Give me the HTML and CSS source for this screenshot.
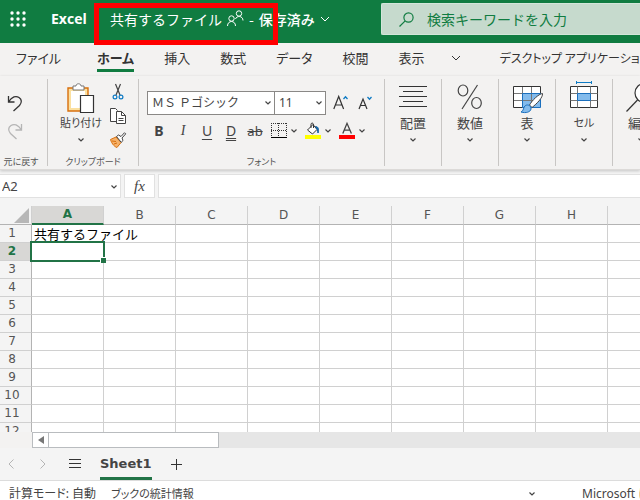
FILE: index.html
```html
<!DOCTYPE html>
<html lang="ja">
<head>
    <meta charset="UTF-8">
    <meta name="viewport" content="width=device-width, initial-scale=1.0">
    <title>Excel</title>
    <link rel="stylesheet" href="styles.css">
</head>
<body>
    <svg class="defs" aria-hidden="true">
        <symbol id="chevron" viewBox="0 0 10 6"><path d="M1 1l4 4 4-4" fill="none" stroke="currentColor"/></symbol>
        <symbol id="caret" viewBox="0 0 6 4"><path d="M.5 .5L3 3 5.500 .5" fill="none" stroke="currentColor" stroke-width="1.200"/></symbol>
    </svg>

    <header class="header">
        <button class="waffle" aria-label="アプリ起動ツール">
            <svg width="16" height="16" viewBox="0 0 16 16" fill="#fff">
                <circle cx="2" cy="2" r="1.700"/><circle cx="8" cy="2" r="1.700"/><circle cx="14" cy="2" r="1.700"/>
                <circle cx="2" cy="8" r="1.700"/><circle cx="8" cy="8" r="1.700"/><circle cx="14" cy="8" r="1.700"/>
                <circle cx="2" cy="14" r="1.700"/><circle cx="8" cy="14" r="1.700"/><circle cx="14" cy="14" r="1.700"/>
            </svg>
        </button>
        <span class="app-name">Excel</span>
        <button class="doc-title">
            <span>共有するファイル</span>
            <svg class="people" width="17" height="17" viewBox="0 0 17 17" fill="none" stroke="#fff">
                <circle cx="4.500" cy="7.500" r="2.700"/><path d="M.5 15c0-6 8-6 8 0"/>
                <circle cx="12" cy="2.500" r="2.700"/><path d="M8.500 8c1-3.500 7.500-3.500 7.500 1.500"/>
            </svg>
            <span>-</span>
            <span class="saved">保存済み</span>
            <svg width="10" height="6"><use href="#chevron"/></svg>
        </button>
        <label class="search">
            <svg width="15" height="15" viewBox="0 0 15 15" fill="none" stroke="#107c41" stroke-width="1.200"><circle cx="9.500" cy="5.500" r="4.600"/><path d="M6.200 8.800L.5 14.500"/></svg>
            <input type="text" placeholder="検索キーワードを入力" aria-label="検索">
        </label>
        <div class="highlight"></div>
    </header>

    <nav class="tabs">
        <button class="tab tab-file">ファイル</button>
        <button class="tab active">ホーム</button>
        <button class="tab">挿入</button>
        <button class="tab">数式</button>
        <button class="tab">データ</button>
        <button class="tab">校閲</button>
        <button class="tab">表示</button>
        <button class="tab tab-more" aria-label="その他のタブ"><svg width="10" height="6"><use href="#chevron"/></svg></button>
        <button class="tab desktop-app">デスクトップ アプリケーションで開く</button>
    </nav>

    <div class="ribbon">
        <section class="group group-undo">
            <div class="group-body stack">
                <button aria-label="元に戻す"><svg width="16" height="17" viewBox="0 0 16 17" fill="none" stroke="#333" stroke-width="1.300"><path d="M1.500 1v6h6M1.500 7C5 1.500 9 .5 12 2.500s3 5 .5 8L6.500 16"/></svg></button>
                <button aria-label="やり直し"><svg width="16" height="17" viewBox="0 0 16 17" fill="none" stroke="#b5b5b5" stroke-width="1.300"><path d="M14.500 1v6h-6M14.500 7C11 1.500 7 .5 4 2.500s-3 5-.5 8L9.500 16"/></svg></button>
            </div>
            <h2>元に戻す</h2>
        </section>
        <section class="group group-clipboard">
            <div class="group-body">
                <button class="big paste">
                    <svg width="28" height="30" viewBox="0 0 28 30">
                        <path d="M1 5h20v23H1z" fill="#fbe0a0" stroke="#d86f0c" stroke-width="1.400"/>
                        <path d="M4 8h14v17H4z" fill="#fff"/>
                        <path d="M6 7V3h3c0-3 5-3 5 0h3v4z" fill="#fff" stroke="#777"/>
                        <path d="M13.500 12.500h13v17h-13z" fill="#fff" stroke="#333" stroke-width="1.200"/>
                    </svg>
                    <span>貼り付け</span>
                    <svg width="6" height="4"><use href="#caret"/></svg>
                </button>
                <div class="small-icons">
                    <button aria-label="切り取り"><svg width="16" height="16" viewBox="0 0 16 16" fill="none" stroke="#444" stroke-width="1.200"><path d="M5.500 0l4.500 11M10.500 0L6 11"/><circle cx="5" cy="13" r="1.900" stroke="#0f7bc4"/><circle cx="11" cy="13" r="1.900" stroke="#0f7bc4"/></svg></button>
                    <button aria-label="コピー"><svg width="16" height="16" viewBox="0 0 16 16" fill="#fff" stroke="#444"><path d="M6.500 13.500h-6v-13h5l2 2"/><path d="M6.500 3.500h5l4 4v8h-9z"/><path d="M11.500 3.500v4h4M8.500 10.500h5M8.500 12.500h5" fill="none"/></svg></button>
                    <button aria-label="書式のコピー"><svg width="16" height="16" viewBox="0 0 16 16"><path d="M.5 7.500L6 5l5 5.500-4 5c-2-.5-5-3-6.500-8z" fill="#f6b26b" stroke="#d86f0c"/><path d="M2 9l4 .5M4 12l3-1" stroke="#d86f0c"/><path d="M6.500 4.500l2-1.500 2.500 1.500L14.500.7l1.200 1.200L12 6l1 2.500-1.800 1.800z" fill="#fff" stroke="#444"/></svg></button>
                </div>
            </div>
            <h2>クリップボード</h2>
        </section>
        <section class="group group-font">
            <div class="group-body font-body">
                <div class="font-row">
                    <div class="combo combo-font">
                        <select aria-label="フォント"><option>ＭＳ Ｐゴシック</option></select>
                        <svg width="6" height="4"><use href="#caret"/></svg>
                    </div>
                    <div class="combo combo-size">
                        <select aria-label="フォント サイズ"><option>11</option></select>
                        <svg width="6" height="4"><use href="#caret"/></svg>
                    </div>
                    <button class="grow" aria-label="フォント サイズの拡大"><svg width="16" height="17" viewBox="0 0 16 17" fill="none"><path d="M.8 14L5.700 1.500 10.600 14M2.500 10h6.400" stroke="#333" stroke-width="1.200"/><path d="M10.500 4L12.500 1.700 14.500 4" stroke="#0f7bc4" stroke-width="1.300"/></svg></button>
                    <button class="shrink" aria-label="フォント サイズの縮小"><svg width="16" height="17" viewBox="0 0 16 17" fill="none"><path d="M1 14L5 4l4 10M2.400 10.500h5.200" stroke="#333" stroke-width="1.200"/><path d="M9.500 2L11.500 4.300 13.500 2" stroke="#0f7bc4" stroke-width="1.300"/></svg></button>
                </div>
                <div class="font-row format-row">
                    <button class="fmt bold">B</button>
                    <button class="fmt italic">I</button>
                    <button class="fmt underline">U</button>
                    <button class="fmt double">D</button>
                    <button class="fmt strike">ab</button>
                    <button class="tool" aria-label="罫線"><svg width="16" height="16" viewBox="0 0 16 16"><path d="M0 .5h16M0 7.500h16M.5 0v14M7.500 0v14M15.500 0v14" stroke="#333" stroke-dasharray="1 1"/><path d="M0 14.500h16" stroke="#000"/></svg><svg width="6" height="4"><use href="#caret"/></svg></button>
                    <button class="tool" aria-label="塗りつぶしの色"><svg width="16" height="16" viewBox="0 0 16 16"><path d="M2.500 7L8 1.500l4 5-4.500 4.500z" fill="#fff" stroke="#333"/><path d="M6 5V1.500C6-.5 8.500-.5 8.500 2v3" fill="none" stroke="#333"/><path d="M10.500 3.500c3 0 3.500 3 2.500 6.500-.2-3-1-4.500-2.500-6.500z" fill="#0f7bc4" stroke="#0f5a9c"/><path d="M0 12h16v4H0z" fill="#ff0"/></svg><svg width="6" height="4"><use href="#caret"/></svg></button>
                    <button class="tool" aria-label="フォントの色"><svg width="16" height="16" viewBox="0 0 16 16"><path d="M3.800 10.500L8 .3l4.400 10.200M5.300 7.200h5.500" fill="none" stroke="#444" stroke-width="1.300"/><path d="M0 12h16v4H0z" fill="red"/></svg><svg width="6" height="4"><use href="#caret"/></svg></button>
                </div>
            </div>
            <h2>フォント</h2>
        </section>
        <section class="group group-drop">
            <button class="big">
                <svg width="28" height="30" viewBox="0 0 28 30" stroke="#333"><path d="M0 3.500h28M4 8.500h20M0 13.500h28M4 18.500h20M0 23.500h28"/></svg>
                <span>配置</span>
                <svg width="6" height="4"><use href="#caret"/></svg>
            </button>
        </section>
        <section class="group group-drop">
            <button class="big">
                <svg width="28" height="30" viewBox="0 0 28 30" fill="none" stroke="#444" stroke-width="1.200"><ellipse cx="7" cy="7.500" rx="4.800" ry="5.500"/><ellipse cx="20.500" cy="20" rx="4.800" ry="5.500"/><path d="M21.500 2l-15.500 24"/></svg>
                <span>数値</span>
                <svg width="6" height="4"><use href="#caret"/></svg>
            </button>
        </section>
        <section class="group group-drop">
            <button class="big">
                <svg width="30" height="30" viewBox="0 0 30 30">
                    <path d="M1.500 3.500h27v21h-27z" fill="#fff"/><path d="M10.500 10.500h18v14h-18z" fill="#83bbec"/>
                    <path d="M1.500 10.500h27M1.500 17.500h27M10.500 3.500v21M19.500 3.500v21" stroke="#777" fill="none"/>
                    <path d="M28.500 10.500v-7h-27v21h9" stroke="#333" fill="none"/>
                    <path d="M10.500 24.500v-14h18v14z" stroke="#1a6fbd" fill="none"/>
                    <path d="M30.500 10.500c-4 .5-10.500 7-13 11.500l2.500 2.500C25 20.500 31 14.500 30.500 10.500z" fill="#fff" stroke="#444"/>
                    <path d="M9 29c3-1 2-5 4.500-6.500s6 .5 5.500 3.500-5 4.500-10 3z" fill="#83bbec" stroke="#1a6fbd"/>
                </svg>
                <span>表</span>
                <svg width="6" height="4"><use href="#caret"/></svg>
            </button>
        </section>
        <section class="group group-drop">
            <button class="big">
                <svg width="28" height="30" viewBox="0 0 28 30">
                    <path d="M.5 3.500h27v21H.5z" fill="#fff" stroke="#333"/>
                    <path d="M.5 10.500h27M.5 17.500h27M7.500 3.500v21M20.500 3.500v21" stroke="#777"/>
                    <path d="M7.500 10.500h13v7h-13z" fill="#83bbec" stroke="#1a6fbd"/>
                    <path d="M6.500 -.5h15M6.500-2v3M21.500-2v3" stroke="#0f7bc4"/>
                </svg>
                <span class="kana">セル</span>
                <svg width="6" height="4"><use href="#caret"/></svg>
            </button>
        </section>
        <section class="group group-drop">
            <button class="big">
                <svg width="30" height="30" viewBox="0 0 30 30" fill="none" stroke="#333" stroke-width="1.200"><circle cx="18.500" cy="10" r="9.500" fill="#fff"/><path d="M11.500 17L.5 28.500"/></svg>
                <span>編集</span>
                <svg width="6" height="4"><use href="#caret"/></svg>
            </button>
        </section>
    </div>

    <div class="formula-bar">
        <div class="name-box">
            <input type="text" value="A2" aria-label="名前ボックス">
            <svg width="6" height="4"><use href="#caret"/></svg>
        </div>
        <button class="fx">fx</button>
        <input class="formula" type="text" aria-label="数式バー">
    </div>

    <main class="grid">
        <table class="sheet">
            <colgroup><col class="col-num"><col span="9" class="col-cell"></colgroup>
            <thead>
                <tr><th class="corner"><svg width="15" height="15"><path d="M15 0v15H0z" fill="#b7b7b7"/></svg></th><th class="selected">A</th><th>B</th><th>C</th><th>D</th><th>E</th><th>F</th><th>G</th><th>H</th><th>I</th></tr>
            </thead>
            <tbody>
                <tr><th>1</th><td class="spill">共有するファイル</td><td></td><td></td><td></td><td></td><td></td><td></td><td></td><td></td></tr>
                <tr><th class="selected">2</th><td class="current"><div class="selection"></div></td><td></td><td></td><td></td><td></td><td></td><td></td><td></td><td></td></tr>
                <tr><th>3</th><td></td><td></td><td></td><td></td><td></td><td></td><td></td><td></td><td></td></tr>
                <tr><th>4</th><td></td><td></td><td></td><td></td><td></td><td></td><td></td><td></td><td></td></tr>
                <tr><th>5</th><td></td><td></td><td></td><td></td><td></td><td></td><td></td><td></td><td></td></tr>
                <tr><th>6</th><td></td><td></td><td></td><td></td><td></td><td></td><td></td><td></td><td></td></tr>
                <tr><th>7</th><td></td><td></td><td></td><td></td><td></td><td></td><td></td><td></td><td></td></tr>
                <tr><th>8</th><td></td><td></td><td></td><td></td><td></td><td></td><td></td><td></td><td></td></tr>
                <tr><th>9</th><td></td><td></td><td></td><td></td><td></td><td></td><td></td><td></td><td></td></tr>
                <tr><th>10</th><td></td><td></td><td></td><td></td><td></td><td></td><td></td><td></td><td></td></tr>
                <tr><th>11</th><td></td><td></td><td></td><td></td><td></td><td></td><td></td><td></td><td></td></tr>
                <tr><th>12</th><td></td><td></td><td></td><td></td><td></td><td></td><td></td><td></td><td></td></tr>
            </tbody>
        </table>
    </main>

    <div class="scrollbar">
        <button class="scroll-left" aria-label="左へスクロール"><svg width="6" height="8"><path d="M6 0v8L0 4z" fill="#777"/></svg></button>
        <div class="thumb"></div>
    </div>

    <div class="sheet-tabs">
        <button class="prev" aria-label="前のシート"><svg width="6" height="10" viewBox="0 0 6 10" fill="none" stroke="#b5b5b5"><path d="M5.500 .5L1 5l4.500 4.500"/></svg></button>
        <button class="next" aria-label="次のシート"><svg width="6" height="10" viewBox="0 0 6 10" fill="none" stroke="#b5b5b5"><path d="M.5 .5L5 5 .5 9.500"/></svg></button>
        <button class="all-sheets" aria-label="すべてのシート"><svg width="12" height="10" viewBox="0 0 12 10" stroke="#333"><path d="M0 .5h12M0 4.500h12M0 8.500h12"/></svg></button>
        <button class="sheet-name">Sheet1</button>
        <button class="add" aria-label="新しいシート"><svg width="11" height="11" viewBox="0 0 11 11" stroke="#333"><path d="M0 5.500h11M5.500 0v11"/></svg></button>
    </div>

    <footer class="status">
        <span class="calc">計算モード: 自動</span>
        <span class="stats">ブックの統計情報</span>
        <svg class="status-caret" width="6" height="4"><use href="#caret"/></svg>
        <span class="feedback">Microsoft にフィードバックを送信</span>
    </footer>
</body>
</html>
```
FILE: styles.css
```css
/* General Styles */
* {
    box-sizing: border-box;
}

body {
    margin: 0;
    height: 100vh;
    display: flex;
    flex-direction: column;
    overflow: hidden;
    background: #f3f2f1;
    color: #444;
    font-family: "Noto Sans", "Noto Sans CJK JP", sans-serif;
    font-size: 12px;
    line-height: 16px;
    white-space: nowrap;
}

button, input, select {
    font: inherit;
    color: inherit;
    border: none;
    padding: 0;
    background: none;
    white-space: nowrap;
}

svg {
    display: block;
    flex-shrink: 0;
    overflow: visible;
}

.defs {
    position: absolute;
    width: 0;
    height: 0;
}

/* Header */
.header {
    position: relative;
    display: flex;
    align-items: center;
    flex-shrink: 0;
    padding: 3px 0 8px 10px;
    background: #107c41;
    color: #fff;
    font-size: 14px;
}

.app-name {
    width: 59px;
    margin-left: 25px;
    font-family: "Open Sans", sans-serif;
    font-weight: 700;
}

.doc-title {
    display: flex;
    align-items: center;
    gap: 5px;
    width: 271px;
    font-family: "Noto Sans CJK JP", sans-serif;
}

.saved {
    font-weight: 500;
}

.search {
    flex: 1;
    display: flex;
    align-items: center;
    gap: 13px;
    height: 32px;
    padding-left: 17px;
    border: 1px solid #d3e6da;
    border-right: none;
    border-radius: 2px 0 0 2px;
    background: #c6dacd;
}

.search input {
    flex: 1;
    min-width: 0;
    font-family: "Noto Sans CJK JP", sans-serif;
}

.search input::placeholder {
    color: #107c41;
    opacity: 1;
}

/* Red frame round the file name */
.highlight {
    position: absolute;
    top: 3px;
    left: 94px;
    width: 184px;
    height: 42px;
    border: 5px solid #f00;
    z-index: 1;
}

/* Ribbon tabs */
.tabs {
    display: flex;
    align-items: center;
    flex-shrink: 0;
    gap: 30px;
    height: 33px;
    padding-left: 16px;
    overflow: hidden;
    color: #333;
    font-family: "Noto Sans CJK JP", sans-serif;
    font-size: 13px;
    font-feature-settings: "palt";
}

.tab {
    flex-shrink: 0;
    height: 25px;
    border-bottom: 3px solid transparent;
}

.tab.active {
    font-weight: 700;
    border-color: #107c41;
}

.tab-file {
    margin-right: 6px;
}

.tab-more {
    margin: 0 9px 0 -4px;
}

.desktop-app {
    font-size: 12px;
}

/* Ribbon */
.ribbon {
    display: flex;
    flex-shrink: 0;
    height: 94px;
    padding: 3px 0;
    border-bottom: 1px solid #dcdad8;
    box-shadow: 0 1px 3px rgba(0, 0, 0, 0.2);
    font-feature-settings: "palt";
    z-index: 1;
}

.group {
    display: flex;
    flex-direction: column;
    align-items: center;
    flex-shrink: 0;
    border-right: 1px solid #c8c6c4;
}

.group h2 {
    margin: auto 0 0;
    font-size: 9px;
    font-weight: 400;
    line-height: 9px;
    color: #555;
}

.group-undo {
    width: 48px;
}

.group-undo h2 {
    padding-right: 5px;
}

.group-clipboard {
    width: 91px;
}

.group-font {
    width: 246px;
}

.group-drop {
    width: 57px;
}

.group-body {
    display: flex;
}

.stack {
    flex-direction: column;
    gap: 11px;
    padding: 16px 17px 0 0;
}

.group-clipboard .group-body {
    gap: 8px;
}

.big {
    display: flex;
    flex-direction: column;
    align-items: center;
    padding-top: 4px;
    font-size: 13px;
}

.big span {
    line-height: 20px;
    margin-bottom: 5px;
}

.paste, .big .kana {
    font-size: 11px;
}

.small-icons {
    display: flex;
    flex-direction: column;
    gap: 8px;
    padding-top: 5px;
}

/* Font group */
.font-body {
    flex-direction: column;
    align-self: stretch;
    gap: 6px;
    padding: 12px 0 0 8px;
}

.font-row {
    display: flex;
    align-items: center;
}

.combo {
    position: relative;
    height: 24px;
}

.combo select {
    width: 100%;
    height: 100%;
    padding-left: 4px;
    appearance: none;
    border: 1px solid #8a8886;
    border-radius: 0;
    background: #fff;
    font-feature-settings: normal;
}

.combo svg, .name-box svg {
    position: absolute;
    top: 10px;
    right: 4px;
    pointer-events: none;
}

.combo-font {
    width: 128px;
}

.combo-size {
    width: 52px;
    margin-left: -1px;
}

.grow {
    margin-left: 7px;
}

.shrink {
    margin-left: 9px;
}

.fmt {
    width: 24px;
    height: 20px;
    font-size: 14px;
}

.bold {
    font-weight: 700;
}

.italic {
    font-family: "Liberation Serif", serif;
    font-style: italic;
}

.underline {
    text-decoration: underline;
    text-underline-offset: 3px;
}

.double {
    text-decoration: underline double;
    text-underline-offset: 2px;
}

.strike {
    font-size: 13px;
    text-decoration: line-through;
}

.tool {
    display: flex;
    align-items: center;
    gap: 4px;
    width: 34px;
}

.strike + .tool {
    margin-left: 4px;
}

/* Formula bar */
.formula-bar {
    display: flex;
    flex-shrink: 0;
    gap: 3px;
    padding: 4px 0 8px;
    background: #f4f4f4;
}

.name-box, .fx, .formula {
    height: 24px;
    border: 1px solid #e1e1e1;
    background: #fff;
}

.name-box {
    position: relative;
    width: 121px;
    border-left: none;
}

.name-box input {
    width: 100px;
    height: 22px;
    padding-left: 2px;
    font-size: 13px;
}

.name-box svg {
    right: 3px;
}

.fx {
    width: 31px;
    font-family: "Liberation Serif", serif;
    font-size: 15px;
    font-style: italic;
}

.formula {
    flex: 1;
    min-width: 0;
    border-right: none;
}

/* Grid */
.grid {
    flex: 1;
    min-height: 0;
    overflow: hidden;
    background: #fff;
}

.sheet {
    width: 680px;
    table-layout: fixed;
    border-spacing: 0;
}

.col-num {
    width: 32px;
}

.col-cell {
    width: 72px;
}

.sheet th, .sheet td {
    height: 18px;
    padding: 0;
    line-height: 17px;
    border-right: 1px solid #d0d0d0;
    border-bottom: 1px solid #d0d0d0;
}

.sheet th {
    background: #f4f4f4;
    color: #555;
    font-family: "DejaVu Sans", sans-serif;
    font-weight: 400;
}

.sheet thead th {
    height: 19px;
    border-bottom-color: #b3b3b3;
}

.sheet tbody th {
    padding-right: 7px;
    border-right-color: #b3b3b3;
}

.sheet .corner svg {
    margin-left: 14px;
}

.sheet th.selected {
    background: #d8d7d5;
    color: #217346;
    font-weight: 700;
}

.sheet thead th.selected {
    border-bottom: 2px solid #217346;
}

.sheet td.spill {
    padding-left: 2px;
    border-right: none;
    color: #000;
    font-family: "Noto Sans CJK JP", sans-serif;
    font-size: 13px;
}

.current {
    position: relative;
}

.selection {
    position: absolute;
    inset: -2px;
    border: 2px solid #217346;
}

.selection::after {
    content: "";
    position: absolute;
    right: -3px;
    bottom: -3px;
    width: 5px;
    height: 5px;
    border: solid #fff;
    border-width: 1px 0 0 1px;
    background: #217346;
}

/* Scrollbar */
.scrollbar {
    display: flex;
    flex-shrink: 0;
    height: 16px;
    margin-left: 32px;
    background: #e6e6e6;
}

.scroll-left {
    display: flex;
    align-items: center;
    justify-content: center;
    width: 17px;
    border: 1px solid #b9bcbf;
    background: #fff;
}

.thumb {
    width: 171px;
    margin-left: -1px;
    border: 1px solid #b9bcbf;
    background: #fff;
}

/* Sheet tabs */
.sheet-tabs {
    display: flex;
    align-items: center;
    flex-shrink: 0;
    height: 33px;
    padding-left: 8px;
    border-bottom: 1px solid #dcdcdc;
    background: #f4f4f4;
}

.next {
    margin-left: 26px;
}

.all-sheets {
    margin-left: 23px;
}

.sheet-name {
    align-self: stretch;
    margin: 0 19px;
    padding-top: 2px;
    border-bottom: 3px solid #217346;
    font-family: "DejaVu Sans", sans-serif;
    font-size: 13px;
    font-weight: 700;
}

/* Status bar */
.status {
    display: flex;
    align-items: center;
    flex-shrink: 0;
    height: 19px;
    padding: 6px 0 0 9px;
    overflow: hidden;
    background: #fff;
    font-feature-settings: "palt";
}

.stats {
    margin-left: 15px;
    font-size: 11px;
}

.status-caret {
    margin-left: auto;
}

/* The end of the link runs off the window */
.feedback {
    width: 58px;
    margin-left: 47px;
}
```
